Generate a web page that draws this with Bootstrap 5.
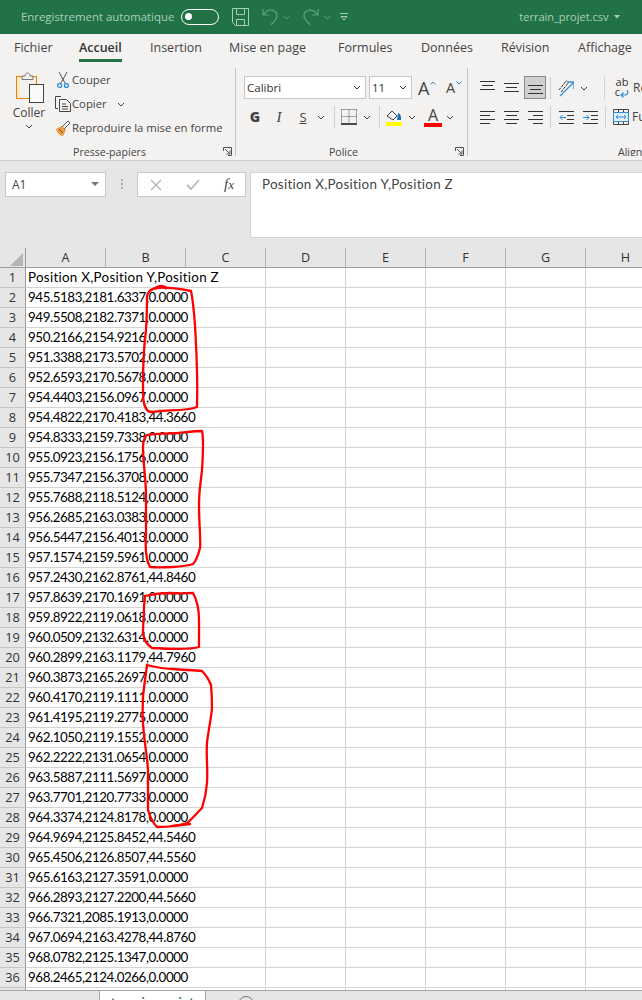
<!DOCTYPE html>
<html lang="fr"><head><meta charset="utf-8"><title>terrain_projet.csv</title>
<link href="https://cdn.jsdelivr.net/npm/bootstrap@5.3.0/dist/css/bootstrap.min.css" rel="stylesheet">
<style>
html,body{margin:0;height:1000px;overflow:hidden;background:#e6e6e6}
.xl-app{height:1000px;width:642px;overflow:hidden;font-family:"Open Sans","Noto Sans",sans-serif;color:#444}
.tb{height:34px;flex:none;background:#217346;color:#a9cfb9;font-size:11.4px;padding-left:21px;white-space:nowrap}
.tb-toggle{width:38px;height:16px;border:1.5px solid #fff;border-radius:8px;margin-left:7px;flex:none;padding:3px 0 0 3px}
.tb-dot{display:block;width:7px;height:7px;border-radius:50%;background:#fff}
.tb svg{flex:none}
.tb-save{margin-left:13px}.tb-undo{margin-left:13px}.tb-redo{margin-left:7px}.tb-chev{margin-left:5px}.tb-cust{margin-left:9px}
.tb-name{margin-left:171px;font-size:11px}.tb-tri{margin-left:6px}
.rt{height:28px;flex:none;background:#f3f2f1;padding-left:14px;grid-template-columns:65px 71px 79px 109px 83px 80px 77px auto;justify-items:start;font-size:12.5px;color:#444;white-space:nowrap}
.rt-item{line-height:28px;height:28px;position:relative}
.rt-on{font-weight:600;color:#333}
.rt-on::after{content:"";position:absolute;left:0;right:0;bottom:0;height:3px;background:#217346}
.rb{height:99px;flex:none;background:#f3f2f1;border-bottom:1px solid #d2d0ce;padding-top:6px;font-size:11.3px;white-space:nowrap}
.rb svg{flex:none}
.grp{height:88px;flex:none;position:relative}
.grp-sep{border-right:1px solid #c8c6c4}
.g1{width:236px}.g2{width:232px;padding-left:8px}.g3{width:174px;overflow:hidden}
.grp-main{height:76px;flex:none}
.grp-foot{height:12px;flex:none;font-size:10.6px;line-height:16px;color:#444;text-align:center;padding-right:16px}
.g2 .grp-foot{padding-right:24px}
.g3 .grp-foot{text-align:left;padding-left:150px;padding-right:0}
.launch{position:absolute;right:3px;bottom:0}
.paste{width:50px;margin-left:4px;padding-top:3px;line-height:14px}
.paste svg{display:block}
.paste-t{margin-top:3px;margin-bottom:4px;font-size:12px}
.small-cmds{margin-left:-1px}
.cmd{height:24px}.cmd-i{width:19px;flex:none}
.cmd-c{margin-left:10px}
.r1{height:31px;padding-top:8px}
.r2{height:34px;padding-top:2px}
.fbox{height:23px;background:#fff;border:1px solid #c8c6c4;font-size:11.5px;color:#333;padding:0 4px 0 2px;flex:none}
.fb-name{width:122px}.fb-size{width:43px;margin-left:3px}
.grow{font-size:18px;line-height:20px;color:#444;flex:none}
.grow-1{width:12px;margin-left:6px}.grow-2{width:10px;margin-left:10px;font-size:14.5px}
.grow-c{align-self:flex-start;margin-top:5px}
.cell{width:24px;flex:none;text-align:center;height:22px;line-height:22px}
.cell-g{margin-left:-1px}
.gis{font-family:"Open Sans",sans-serif;font-size:13px;color:#444}
.gis-b{font-weight:800;font-size:14px}.gis-i{font-family:"Liberation Serif",serif;font-style:italic;font-size:15px}.gis-s{text-decoration:underline}
.chev-c{width:12px;flex:none;text-align:center}
.vsep{width:1px;height:22px;background:#d2d0ce;flex:none;margin:0 6px}
.v-first{margin-left:7px}
.v-37{margin:0 7px 0 3px}.v-33{margin:0 3px}.v-149{margin:0 9px 0 14px}
.acol{font-size:16px;line-height:16px;color:#444;width:18px;text-align:center;border-bottom:4px solid #f00;flex:none;margin:0 2px 0 6px}
.a-row{margin-left:7px}
.a-sel{background:#d2d0ce;border:1px solid #8a8886;height:23px;width:22px;margin:0 1px;flex:none}
.a-cell{width:24px;flex:none}
.wrap-t{font-size:11px;line-height:10px;color:#333;width:16px;flex:none;text-align:center}
.cut-t{margin-left:3px;font-size:12px}
.fx{height:87px;flex:none;background:#e6e6e6;padding:11px 0 0 5px}
.nbox{width:101px;height:25px;background:#fff;border:1px solid #c8c8c8;font-size:12px;padding:0 6px;color:#444;flex:none}
.fx-dots{width:31px;flex:none;padding-top:7px}
.cbox{width:109px;height:25px;background:#fff;border:1px solid #c8c8c8;flex:none;padding:0 11px 0 12px}
.inbox{flex:1;height:66px;margin-left:4px;background:#fff;border:1px solid #d4d4d4;border-right:0;font-family:Lato,sans-serif;font-size:13.4px;letter-spacing:.28px;color:#444;padding:1px 0 0 11px}
.sheet-w{flex:1;overflow:hidden;background:#fff;min-height:0}
.sheet{table-layout:fixed;width:666px;border-collapse:separate;border-spacing:0;font-family:Lato,"Liberation Sans",sans-serif;font-size:13.4px;color:#000}
.sc-h{width:26px}.sc-x{width:80px}
.sheet th,.sheet td{height:20px;padding:0;box-sizing:border-box;line-height:19px}
.sheet thead th{background:#e6e6e6;border-bottom:1px solid #9b9b9b;border-right:1px solid #b4b4b4;text-align:center;font-weight:400;color:#333;font-size:12.6px;font-family:"Open Sans",sans-serif}
.sheet thead th:first-child{border-right-color:#9b9b9b;position:relative}
.corner{position:absolute;left:10px;top:5px}
.sheet tbody th{background:#e6e6e6;border-right:1px solid #9b9b9b;border-bottom:1px solid #c6c6c6;text-align:center;font-weight:400;color:#333;font-size:12.8px;font-family:"Open Sans",sans-serif}
.sheet tbody td{background:#fff;border-right:1px solid #d4d4d4;border-bottom:1px solid #d4d4d4;white-space:nowrap;letter-spacing:-.44px}
.sheet tbody td:first-of-type{padding-left:2px;overflow:visible}
.sheet tbody tr:first-child td{letter-spacing:.28px}
.tabs{height:10px;flex:none;background:#e6e6e6;overflow:hidden;border-top:1px solid #a6a6a6}
.tab-sp{width:100px;flex:none;border-right:1px solid #a6a6a6}
.tab-on{width:106px;flex:none;background:#fff;margin-top:-1px;text-align:center;color:#217346;font-weight:700;font-size:12px;line-height:14px;padding-top:6px;border-right:1px solid #a6a6a6}
.tab-add{margin:5px 0 0 32px;flex:none}
.ink{position:absolute;left:0;top:0;pointer-events:none}
</style></head><body>
<div class="xl-app d-flex flex-column position-relative">

<div class="tb d-flex align-items-center">
<span>Enregistrement automatique</span>
<span class="tb-toggle"><span class="tb-dot"></span></span>
<svg class="tb-save" width="17" height="18" viewBox="0 0 17 18" fill="none" stroke="#a9cfb9"><path d="M.5.5h16v17H3.500l-3-3zM4.500 .5v6h8v-6M4.500 17.500v-6h8v6"/></svg>
<svg class="tb-undo" width="16" height="18" viewBox="0 0 16 18" fill="none" stroke="#5f9f7f" stroke-width="1.2"><path d="M1 1v6h6M1 7l4-4c5-2 10 0 10 5 0 3-3 5-6 9"/></svg>
<svg class="tb-chev" width="7" height="5" viewBox="0 0 7 5" fill="none" stroke="#5f9f7f"><path d="M.5 1l3 3 3-3"/></svg>
<svg class="tb-undo" width="16" height="18" viewBox="0 0 16 18" fill="none" stroke="#5f9f7f" stroke-width="1.2"><path d="M15 1v6H9M15 7l-4-4C6 1 1 3 1 8c0 3 3 5 6 9"/></svg>
<svg class="tb-chev" width="7" height="5" viewBox="0 0 7 5" fill="none" stroke="#5f9f7f"><path d="M.5 1l3 3 3-3"/></svg>
<svg class="tb-cust" width="8" height="8" viewBox="0 0 8 8" fill="none" stroke="#a9cfb9"><path d="M0 .5h8M1 3.500h6L4 7z"/></svg>
<span class="tb-name">terrain_projet.csv</span>
<svg class="tb-tri" width="6" height="4" viewBox="0 0 6 4"><path d="M0 0h6L3 3.500z" fill="#a9cfb9"/></svg>
</div>

<div class="rt d-grid">
<span class="rt-item">Fichier</span><span class="rt-item rt-on">Accueil</span><span class="rt-item">Insertion</span><span class="rt-item">Mise en page</span><span class="rt-item">Formules</span><span class="rt-item">Données</span><span class="rt-item">Révision</span><span class="rt-item">Affichage</span>
</div>

<div class="rb d-flex">

<div class="grp g1 grp-sep d-flex flex-column">
<div class="grp-main d-flex">
<div class="paste d-flex flex-column align-items-center">
<svg width="30" height="32" viewBox="0 0 30 32"><rect x="2.500" y="5.500" width="20" height="22" fill="#fdebc2" stroke="#e8820c"/><rect x="6" y="7" width="15" height="20" fill="#f3f2f1"/><path d="M8 8.500V5h3c0-4 5-4 5 0h3v3.500z" fill="#f3f2f1" stroke="#777"/><rect x="15.500" y="13.500" width="14" height="18" fill="#fafafa" stroke="#444"/></svg>
<span class="paste-t">Coller</span>
<svg width="8" height="5" viewBox="0 0 8 5" fill="none" stroke="#444"><path d="M1 1l3 3 3-3"/></svg>
</div>
<div class="small-cmds d-flex flex-column">
<div class="cmd d-flex align-items-center"><span class="cmd-i d-flex justify-content-center"><svg width="12" height="17" viewBox="0 0 12 17" fill="none"><path d="M2 0l6 11M10 0L4 11" stroke="#555"/><circle cx="2.600" cy="13.500" r="2" stroke="#2e8fd8" stroke-width="1.300"/><circle cx="9.400" cy="13.500" r="2" stroke="#2e8fd8" stroke-width="1.300"/></svg></span><span>Couper</span></div>
<div class="cmd d-flex align-items-center"><span class="cmd-i d-flex justify-content-center"><svg width="16" height="16" viewBox="0 0 16 16" fill="none" stroke="#444"><path d="M6 .5H.5v12H3M4.500 3.500h7l4 4v8h-11z"/><path d="M7 8h4M7 10.500h6M7 13h6"/></svg></span><span>Copier</span><svg class="cmd-c" width="8" height="5" viewBox="0 0 8 5" fill="none" stroke="#444"><path d="M1 1l3 3 3-3"/></svg></div>
<div class="cmd d-flex align-items-center"><span class="cmd-i d-flex justify-content-center"><svg width="16" height="16" viewBox="0 0 16 16"><path d="M1 9l6-3 4 4-3 6c-3 0-6-3-7-7z" fill="#f09a3e"/><path d="M7 7l6-6 2 2-6 6M4 9l4 4" stroke="#555" fill="none"/></svg></span><span>Reproduire la mise en forme</span></div>
</div>
</div>
<div class="grp-foot">Presse-papiers</div>
<svg class="launch" width="9" height="9" viewBox="0 0 9 9" fill="none" stroke="#555"><path d="M.5 4V.5H8.500V8.500H5M2 2l5 5M7 3.500V7H3.500"/></svg>
</div>

<div class="grp g2 grp-sep d-flex flex-column">
<div class="grp-main">
<div class="r1 d-flex align-items-center">
<div class="fbox fb-name d-flex align-items-center justify-content-between"><span>Calibri</span><svg width="8" height="5" viewBox="0 0 8 5" fill="none" stroke="#333"><path d="M1 1l3 3 3-3"/></svg></div>
<div class="fbox fb-size d-flex align-items-center justify-content-between"><span>11</span><svg width="8" height="5" viewBox="0 0 8 5" fill="none" stroke="#333"><path d="M1 1l3 3 3-3"/></svg></div>
<span class="grow grow-1">A</span><svg class="grow-c" width="6" height="4" viewBox="0 0 6 4" fill="none" stroke="#2e8fd8"><path d="M.5 3.500L3 1l2.500 2.500"/></svg>
<span class="grow grow-2">A</span><svg class="grow-c" width="6" height="4" viewBox="0 0 6 4" fill="none" stroke="#2e8fd8"><path d="M.5.5L3 3 5.500.5"/></svg>
</div>
<div class="r2 d-flex align-items-center">
<span class="cell cell-g gis gis-b">G</span><span class="cell gis gis-i">I</span><span class="cell gis gis-s">S</span>
<span class="chev-c"><svg width="8" height="5" viewBox="0 0 8 5" fill="none" stroke="#444"><path d="M1 1l3 3 3-3"/></svg></span>
<span class="vsep v-first"></span>
<svg width="16" height="16" viewBox="0 0 16 16" fill="none"><path d="M.5.5h15M.5 7.500h15M8 .5v14M.5.5v14M15.500.5v14" stroke="#555" stroke-dasharray="1 1"/><path d="M0 15h16" stroke="#111" stroke-width="1.500"/></svg>
<span class="chev-c ms-1"><svg width="8" height="5" viewBox="0 0 8 5" fill="none" stroke="#444"><path d="M1 1l3 3 3-3"/></svg></span>
<span class="vsep"></span>
<svg width="16" height="17" viewBox="0 0 16 17"><path d="M1 7l5-5 5 5-4 4z" fill="none" stroke="#444"/><path d="M12 4c3 1 3 4 3 7h-4z" fill="#1a6fb5"/><rect y="13" width="16" height="4" fill="#ff0"/></svg>
<span class="chev-c ms-1"><svg width="8" height="5" viewBox="0 0 8 5" fill="none" stroke="#444"><path d="M1 1l3 3 3-3"/></svg></span>
<span class="acol">A</span>
<span class="chev-c"><svg width="8" height="5" viewBox="0 0 8 5" fill="none" stroke="#444"><path d="M1 1l3 3 3-3"/></svg></span>
</div>
</div>
<div class="grp-foot">Police</div>
<svg class="launch" width="9" height="9" viewBox="0 0 9 9" fill="none" stroke="#555"><path d="M.5 4V.5H8.500V8.500H5M2 2l5 5M7 3.500V7H3.500"/></svg>
</div>

<div class="grp g3 d-flex flex-column">
<div class="grp-main">
<div class="r1 a-row d-flex align-items-center">
<span class="a-cell d-flex justify-content-center"><svg width="15" height="15" viewBox="0 0 15 15" stroke="#333"><path d="M0 1.500h15M2 5.500h11M0 9.500h15"/></svg></span>
<span class="a-cell d-flex justify-content-center"><svg width="15" height="15" viewBox="0 0 15 15" stroke="#333"><path d="M0 3.500h15M2 7.500h11M0 11.500h15"/></svg></span>
<span class="a-sel d-flex justify-content-center align-items-center"><svg width="15" height="15" viewBox="0 0 15 15" stroke="#333"><path d="M0 5.500h15M2 9.500h11M0 13.500h15"/></svg></span>
<span class="vsep v-37"></span>
<svg width="16" height="18" viewBox="0 0 16 18" fill="none"><path d="M1 11L9 1M3 13l8-10" stroke="#333" stroke-dasharray="3 1"/><path d="M2 17L15 4M9 3h7v7" stroke="#2e8fd8" stroke-width="1.300"/></svg>
<span class="chev-c ms-1"><svg width="8" height="5" viewBox="0 0 8 5" fill="none" stroke="#444"><path d="M1 1l3 3 3-3"/></svg></span>
<span class="vsep v-149"></span>
<span class="wrap-t">ab<br>c<svg width="9" height="8" viewBox="0 0 9 8" fill="none" stroke="#2e8fd8" stroke-width="1.200"><path d="M7 0c2 3 0 5-2 5H1M3.500 2.500L1 5l2.500 2.500"/></svg></span><span class="cut-t">Re</span>
</div>
<div class="r2 a-row d-flex align-items-center">
<span class="a-cell d-flex justify-content-center"><svg width="15" height="15" viewBox="0 0 15 15" stroke="#333"><path d="M0 1.500h15M0 5.500h10M0 9.500h15M0 13.500h10"/></svg></span>
<span class="a-cell d-flex justify-content-center"><svg width="15" height="15" viewBox="0 0 15 15" stroke="#333"><path d="M0 1.500h15M2 5.500h11M0 9.500h15M2 13.500h11"/></svg></span>
<span class="a-cell d-flex justify-content-center"><svg width="15" height="15" viewBox="0 0 15 15" stroke="#333"><path d="M0 1.500h15M5 5.500h10M0 9.500h15M5 13.500h10"/></svg></span>
<span class="vsep v-33"></span>
<span class="a-cell d-flex justify-content-center"><svg width="15" height="15" viewBox="0 0 15 15" fill="none"><path d="M0 1.500h15M8 5.500h7M8 9.500h7M0 13.500h15" stroke="#333"/><path d="M7 7.500H1M3.500 5L1 7.500 3.500 10" stroke="#2e8fd8"/></svg></span>
<span class="a-cell d-flex justify-content-center"><svg width="15" height="15" viewBox="0 0 15 15" fill="none"><path d="M0 1.500h15M8 5.500h7M8 9.500h7M0 13.500h15" stroke="#333"/><path d="M0 7.500h6M3.500 5L6 7.500 3.500 10" stroke="#2e8fd8"/></svg></span>
<span class="vsep v-37"></span>
<svg width="16" height="16" viewBox="0 0 16 16" fill="none"><path d="M.5.5h15v15H.5zM5.500 .5v3M10.500 .5v3M5.500 12.500v3M10.500 12.500v3" stroke="#444"/><path d="M.5 3.500h15v9H.5z" stroke="#2e8fd8" fill="#e3f0fa"/><path d="M3 8h10M5 6L3 8l2 2M11 6l2 2-2 2" stroke="#2e8fd8"/></svg>
<span class="cut-t">Fu</span>
</div>
</div>
<div class="grp-foot">Align</div>
</div>

</div>

<div class="fx d-flex align-items-start">
<div class="nbox d-flex align-items-center justify-content-between"><span>A1</span><svg width="8" height="5" viewBox="0 0 8 5"><path d="M0 0h8L4 4z" fill="#777"/></svg></div>
<div class="fx-dots d-flex justify-content-center"><svg width="2" height="11" viewBox="0 0 2 11" fill="#b0b0b0"><rect width="2" height="2"/><rect y="4" width="2" height="2"/><rect y="8" width="2" height="2"/></svg></div>
<div class="cbox d-flex align-items-center justify-content-between">
<svg width="12" height="12" viewBox="0 0 12 12" stroke="#b8b8b8" stroke-width="1.500"><path d="M1 1l10 10M11 1L1 11"/></svg>
<svg width="14" height="12" viewBox="0 0 14 12" fill="none" stroke="#b8b8b8" stroke-width="1.800"><path d="M1 6l4 4 8-9"/></svg>
<span class="gis-i">f<small>x</small></span>
</div>
<div class="inbox">Position X,Position Y,Position Z</div>
</div>

<div class="sheet-w">
<table class="sheet">
<colgroup><col class="sc-h"><col class="sc-x"><col class="sc-x"><col class="sc-x"><col class="sc-x"><col class="sc-x"><col class="sc-x"><col class="sc-x"><col class="sc-x"></colgroup>
<thead><tr><th><svg class="corner" width="13" height="13" viewBox="0 0 13 13"><path d="M13 0v13H0z" fill="#b5b5b5"/></svg></th><th>A</th><th>B</th><th>C</th><th>D</th><th>E</th><th>F</th><th>G</th><th>H</th></tr></thead>
<tbody>
<tr><th>1</th><td colspan="3">Position X,Position Y,Position Z</td><td></td><td></td><td></td><td></td><td></td></tr>
<tr><th>2</th><td colspan="3">945.5183,2181.6337,0.0000</td><td></td><td></td><td></td><td></td><td></td></tr>
<tr><th>3</th><td colspan="3">949.5508,2182.7371,0.0000</td><td></td><td></td><td></td><td></td><td></td></tr>
<tr><th>4</th><td colspan="3">950.2166,2154.9216,0.0000</td><td></td><td></td><td></td><td></td><td></td></tr>
<tr><th>5</th><td colspan="3">951.3388,2173.5702,0.0000</td><td></td><td></td><td></td><td></td><td></td></tr>
<tr><th>6</th><td colspan="3">952.6593,2170.5678,0.0000</td><td></td><td></td><td></td><td></td><td></td></tr>
<tr><th>7</th><td colspan="3">954.4403,2156.0967,0.0000</td><td></td><td></td><td></td><td></td><td></td></tr>
<tr><th>8</th><td colspan="3">954.4822,2170.4183,44.3660</td><td></td><td></td><td></td><td></td><td></td></tr>
<tr><th>9</th><td colspan="3">954.8333,2159.7338,0.0000</td><td></td><td></td><td></td><td></td><td></td></tr>
<tr><th>10</th><td colspan="3">955.0923,2156.1756,0.0000</td><td></td><td></td><td></td><td></td><td></td></tr>
<tr><th>11</th><td colspan="3">955.7347,2156.3708,0.0000</td><td></td><td></td><td></td><td></td><td></td></tr>
<tr><th>12</th><td colspan="3">955.7688,2118.5124,0.0000</td><td></td><td></td><td></td><td></td><td></td></tr>
<tr><th>13</th><td colspan="3">956.2685,2163.0383,0.0000</td><td></td><td></td><td></td><td></td><td></td></tr>
<tr><th>14</th><td colspan="3">956.5447,2156.4013,0.0000</td><td></td><td></td><td></td><td></td><td></td></tr>
<tr><th>15</th><td colspan="3">957.1574,2159.5961,0.0000</td><td></td><td></td><td></td><td></td><td></td></tr>
<tr><th>16</th><td colspan="3">957.2430,2162.8761,44.8460</td><td></td><td></td><td></td><td></td><td></td></tr>
<tr><th>17</th><td colspan="3">957.8639,2170.1691,0.0000</td><td></td><td></td><td></td><td></td><td></td></tr>
<tr><th>18</th><td colspan="3">959.8922,2119.0618,0.0000</td><td></td><td></td><td></td><td></td><td></td></tr>
<tr><th>19</th><td colspan="3">960.0509,2132.6314,0.0000</td><td></td><td></td><td></td><td></td><td></td></tr>
<tr><th>20</th><td colspan="3">960.2899,2163.1179,44.7960</td><td></td><td></td><td></td><td></td><td></td></tr>
<tr><th>21</th><td colspan="3">960.3873,2165.2697,0.0000</td><td></td><td></td><td></td><td></td><td></td></tr>
<tr><th>22</th><td colspan="3">960.4170,2119.1111,0.0000</td><td></td><td></td><td></td><td></td><td></td></tr>
<tr><th>23</th><td colspan="3">961.4195,2119.2775,0.0000</td><td></td><td></td><td></td><td></td><td></td></tr>
<tr><th>24</th><td colspan="3">962.1050,2119.1552,0.0000</td><td></td><td></td><td></td><td></td><td></td></tr>
<tr><th>25</th><td colspan="3">962.2222,2131.0654,0.0000</td><td></td><td></td><td></td><td></td><td></td></tr>
<tr><th>26</th><td colspan="3">963.5887,2111.5697,0.0000</td><td></td><td></td><td></td><td></td><td></td></tr>
<tr><th>27</th><td colspan="3">963.7701,2120.7733,0.0000</td><td></td><td></td><td></td><td></td><td></td></tr>
<tr><th>28</th><td colspan="3">964.3374,2124.8178,0.0000</td><td></td><td></td><td></td><td></td><td></td></tr>
<tr><th>29</th><td colspan="3">964.9694,2125.8452,44.5460</td><td></td><td></td><td></td><td></td><td></td></tr>
<tr><th>30</th><td colspan="3">965.4506,2126.8507,44.5560</td><td></td><td></td><td></td><td></td><td></td></tr>
<tr><th>31</th><td colspan="3">965.6163,2127.3591,0.0000</td><td></td><td></td><td></td><td></td><td></td></tr>
<tr><th>32</th><td colspan="3">966.2893,2127.2200,44.5660</td><td></td><td></td><td></td><td></td><td></td></tr>
<tr><th>33</th><td colspan="3">966.7321,2085.1913,0.0000</td><td></td><td></td><td></td><td></td><td></td></tr>
<tr><th>34</th><td colspan="3">967.0694,2163.4278,44.8760</td><td></td><td></td><td></td><td></td><td></td></tr>
<tr><th>35</th><td colspan="3">968.0782,2125.1347,0.0000</td><td></td><td></td><td></td><td></td><td></td></tr>
<tr><th>36</th><td colspan="3">968.2465,2124.0266,0.0000</td><td></td><td></td><td></td><td></td><td></td></tr>
<tr><th></th><td colspan="3"></td><td></td><td></td><td></td><td></td><td></td></tr>
</tbody></table>
</div>

<div class="tabs d-flex">
<div class="tab-sp"></div>
<div class="tab-on">terrain_projet</div>
<svg class="tab-add" width="16" height="16" viewBox="0 0 16 16" fill="none" stroke="#777"><circle cx="8" cy="8" r="7.500"/></svg>
</div>

<svg class="ink" width="642" height="1000" viewBox="0 0 642 1000" fill="none" stroke="#f00" stroke-width="2.300" stroke-linejoin="round" stroke-linecap="round">
<path d="M147 296C148 291 151 289 156 288C165 287 180 289 191 291C193 300 194 312 195 325C196 345 198 370 197 407C188 411 170 410 160 411C153 412 149 413 147 410C143 405 143 398 143 385C143 365 144 345 146 330C147 315 147 305 147 296"/>
<path d="M156 288C159 286 163 286 166 288" stroke-width="3"/>
<path d="M147 435C155 433 165 434 178 433C188 432 196 431 202 431C204 440 203 455 202 470C201 480 199 490 199 505C199 525 201 540 200 548C198 556 196 561 193 564C185 567 160 568 150 567C146 560 145 550 146 535C146 520 146 505 146 495C146 480 143 462 143 447C143 441 145 437 147 435"/>
<path d="M145 596C153 594 160 593 170 593C180 594 188 593 193 593C197 600 199 608 199 620C199 630 199 640 199 647C190 650 170 649 152 648C147 645 144 640 143 633C143 625 144 615 144 608C144 603 145 599 145 596"/>
<path d="M147 665C155 667 165 669 173 669C183 670 193 670 202 671C207 676 209 680 211 685C212 695 212 700 212 708C211 720 208 732 207 743C206 755 208 770 207 783C206 795 204 802 202 808C197 813 192 819 187 823C178 826 168 827 157 827C153 823 150 817 148 810C148 795 148 782 148 770C147 755 144 740 143 723C142 713 143 705 143 697C144 685 146 674 147 665"/>
<path d="M172 826L190 824"/>
</svg>
</div>
</body></html>
